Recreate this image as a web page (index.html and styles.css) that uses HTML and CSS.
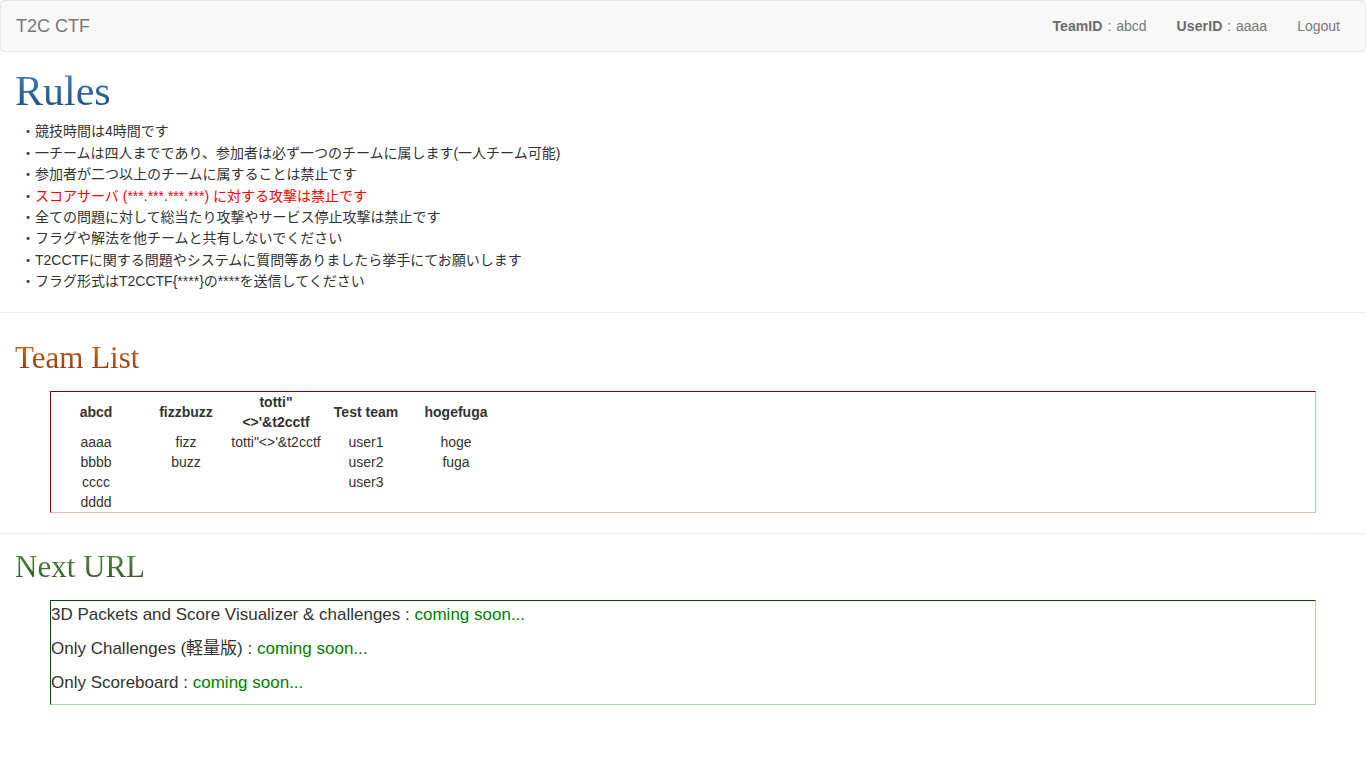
FILE: index.html
```html
<!DOCTYPE html>
<html lang="ja">
<head>
<meta charset="utf-8">
<title>T2C CTF</title>
<link rel="stylesheet" href="styles.css">
</head>
<body>
<nav class="navbar">
  <a class="brand" href="#">T2C CTF</a>
  <ul class="nav-right">
    <li class="nav-item"><b>TeamID</b> : abcd</li>
    <li class="nav-item"><b>UserID</b> : aaaa</li>
    <li class="nav-item"><a href="#" class="nav-link">Logout</a></li>
  </ul>
</nav>
<main class="content">
  <h1 class="title title-blue">Rules</h1>
  <div class="rules">
    <div>・競技時間は4時間です</div>
    <div>・一チームは四人までであり、参加者は必ず一つのチームに属します(一人チーム可能)</div>
    <div>・参加者が二つ以上のチームに属することは禁止です</div>
    <div>・<span class="red">スコアサーバ (***.***.***.***) に対する攻撃は禁止です</span></div>
    <div>・全ての問題に対して総当たり攻撃やサービス停止攻撃は禁止です</div>
    <div>・フラグや解法を他チームと共有しないでください</div>
    <div>・T2CCTFに関する問題やシステムに質問等ありましたら挙手にてお願いします</div>
    <div>・フラグ形式はT2CCTF{****}の****を送信してください</div>
  </div>
  <hr class="sep">
  <h2 class="title title-orange team-title">Team List</h2>
  <div class="box box-red">
    <table class="teams">
      <thead>
        <tr>
          <th>abcd</th>
          <th>fizzbuzz</th>
          <th>totti"<wbr>&lt;&gt;'&amp;t2cctf</th>
          <th>Test team</th>
          <th>hogefuga</th>
        </tr>
      </thead>
      <tbody>
        <tr><td>aaaa</td><td>fizz</td><td>totti"&lt;&gt;'&amp;t2cctf</td><td>user1</td><td>hoge</td></tr>
        <tr><td>bbbb</td><td>buzz</td><td></td><td>user2</td><td>fuga</td></tr>
        <tr><td>cccc</td><td></td><td></td><td>user3</td><td></td></tr>
        <tr><td>dddd</td><td></td><td></td><td></td><td></td></tr>
      </tbody>
    </table>
  </div>
  <hr class="sep sep-2">
  <h2 class="title title-green next-title">Next URL</h2>
  <div class="box box-green urls">
    <p class="url">3D Packets and Score Visualizer &amp; challenges : <span class="soon">coming soon...</span></p>
    <p class="url">Only Challenges (軽量版) : <span class="soon">coming soon...</span></p>
    <p class="url">Only Scoreboard : <span class="soon">coming soon...</span></p>
  </div>
</main>
</body>
</html>
```

FILE: styles.css
```css
html, body {
  margin: 0;
  padding: 0;
  background: #fff;
}
body {
  font-family: "Liberation Sans", "Noto Sans CJK JP", Arial, sans-serif;
  font-size: 14px;
  line-height: 20px;
  color: #333;
}
.navbar {
  display: flex;
  align-items: center;
  justify-content: space-between;
  height: 50px;
  background: #f8f8f8;
  border: 1px solid #e7e7e7;
  border-radius: 4px;
}
.brand {
  padding: 0 15px;
  font-size: 18px;
  line-height: 20px;
  color: #777;
  text-decoration: none;
}
.nav-right {
  display: flex;
  list-style: none;
  margin: 0 10px 0 0;
  padding: 0;
}
.nav-item {
  padding: 0 15px;
  color: #777;
  line-height: 20px;
  word-spacing: 1px;
}
.nav-item b {
  color: #6b6b6b;
  letter-spacing: 0.1px;
}
.nav-link {
  color: #777;
  text-decoration: none;
}
.content {
  padding: 0 15px;
}
.title {
  font-family: "Liberation Serif", "Times New Roman", serif;
  font-weight: normal;
  line-height: 1.1;
  margin: 0;
  display: inline-block;
  -webkit-background-clip: text;
  background-clip: text;
  color: transparent;
}
h1.title {
  font-size: 42px;
  margin-top: 16px;
  margin-bottom: 7px;
}
h2.title {
  font-size: 31px;
}
.title-blue {
  background-image: linear-gradient(180deg, #4a88c6 0%, #2a649c 55%, #1c4877 100%);
}
.title-orange {
  background-image: linear-gradient(180deg, #cf6a22 0%, #a94b12 55%, #85340a 100%);
}
.title-green {
  background-image: linear-gradient(180deg, #5e8e4c 0%, #426f33 55%, #2c5322 100%);
}
.team-title {
  margin-top: 28px;
  margin-bottom: 16px;
}
.next-title {
  margin-top: 16px;
  margin-bottom: 16px;
}
.rules {
  padding-left: 6px;
  line-height: 21.43px;
}
.red {
  color: #ff0000;
}
.sep {
  border: 0;
  border-top: 1px solid #eee;
  margin: 19px -15px 0;
}
.sep-2 {
  margin-top: 20px;
}
.box {
  margin: 0 35px;
  border: 1px solid;
}
.box-red {
  border-color: #800000 #ffb0b0 #ffb0b0 #800000;
}
.box-green {
  border-color: #005000 #a8d8a8 #a8d8a8 #005000;
}
.teams {
  border-collapse: collapse;
  table-layout: fixed;
  border-spacing: 0;
}
.teams th, .teams td {
  width: 90px;
  padding: 0;
  text-align: center;
  vertical-align: middle;
  line-height: 20px;
  font-size: 14px;
}
.teams th {
  font-weight: bold;
}
.urls {
  padding-top: 2px;
}
.url {
  margin: 0 0 10px;
  font-size: 17px;
  line-height: 24.3px;
}
.url:last-child {
  margin-bottom: 8px;
}
.soon {
  color: #008000;
}
```
